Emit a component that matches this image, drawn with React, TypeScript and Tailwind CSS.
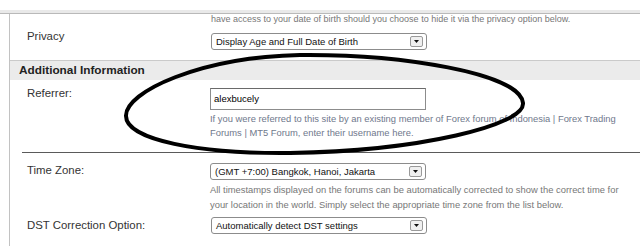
function Select({ value }: { value: string }) {
  return (
    <div className="flex items-center justify-between h-[17px] w-[216px] border border-[#8c8c8c] rounded-[3px] bg-white pl-[4px] pr-[3px]">
      <span className="text-[9.5px] leading-none text-[#111]">{value}</span>
      <span className="flex items-center justify-center w-[13px] h-[11px] border border-[#9a9a9a] rounded-[2px] bg-[#f0f0f0]">
        <svg width="5" height="3" viewBox="0 0 5 3">
          <path d="M0 0 L5 0 L2.5 3 Z" fill="#111" />
        </svg>
      </span>
    </div>
  );
}

export default function App() {
  return (
    <div className="relative w-[640px] h-[246px] overflow-hidden bg-white font-['Liberation_Sans',Arial,sans-serif]">
      <div className="h-[10px]" />
      <div className="h-[4px] bg-[#e9e9e9] border-b border-[#b9b9b9]" />
      <div className="ml-[9px] h-full border-l border-[#c2c2c2]">
        <div className="pl-[201px] text-[9px] leading-[10px] text-[#777]">
          have access to your date of birth should you choose to hide it via the privacy option below.
        </div>

        <div className="flex items-start mt-[6px]">
          <div className="w-[201px] pl-[17px] text-[11.4px] leading-[13px] text-[#333]">Privacy</div>
          <div className="mt-[3px]">
            <Select value="Display Age and Full Date of Birth" />
          </div>
        </div>

        <div className="mt-[10px] h-[20px] flex items-center pl-[9px] bg-[#ebebeb] border-t border-[#cacaca] text-[11.8px] font-bold text-[#222]">
          Additional Information
        </div>

        <div className="flex items-start">
          <div className="w-[201px] pl-[17px] pt-[7px] text-[11.4px] leading-[13px] text-[#333]">Referrer:</div>
          <div className="mt-[8px]">
            <div className="flex items-center h-[22px] w-[216px] border border-[#8c8c8c] border-t-[#6a6a6a] bg-white pl-[3px] text-[9.5px] text-black">
              alexbucely
            </div>
            <div className="mt-[2px] w-[430px] text-[9.4px] leading-[14px] text-[#6f788c]">
              If you were referred to this site by an existing member of Forex forum of Indonesia | Forex Trading
              <br />
              Forums | MT5 Forum, enter their username here.
            </div>
          </div>
        </div>

        <div className="mt-[12px] ml-[12px] border-t border-[#5a5a5a]" />

        <div className="flex items-start mt-[10px]">
          <div className="w-[201px] pl-[17px] pt-[1px] text-[11.4px] leading-[13px] text-[#333]">Time Zone:</div>
          <div>
            <Select value="(GMT +7:00) Bangkok, Hanoi, Jakarta" />
            <div className="mt-[2px] w-[430px] text-[9.4px] leading-[15px] text-[#777]">
              All timestamps displayed on the forums can be automatically corrected to show the correct time for
              <br />
              your location in the world. Simply select the appropriate time zone from the list below.
            </div>
          </div>
        </div>

        <div className="flex items-start mt-[5px]">
          <div className="w-[201px] pl-[17px] pt-[2px] text-[11.4px] leading-[13px] text-[#333]">DST Correction Option:</div>
          <Select value="Automatically detect DST settings" />
        </div>
      </div>

      <svg className="absolute inset-0 pointer-events-none" width="640" height="246" viewBox="0 0 640 246">
        <path
          d="M126 116 C125 92 200 57 300 55 C400 54 520 73 523 103 C525 125 420 151 290 153 C200 154 126 140 126 116 Z"
          fill="none"
          stroke="#000"
          strokeWidth="4"
          strokeLinecap="round"
        />
      </svg>
    </div>
  );
}
